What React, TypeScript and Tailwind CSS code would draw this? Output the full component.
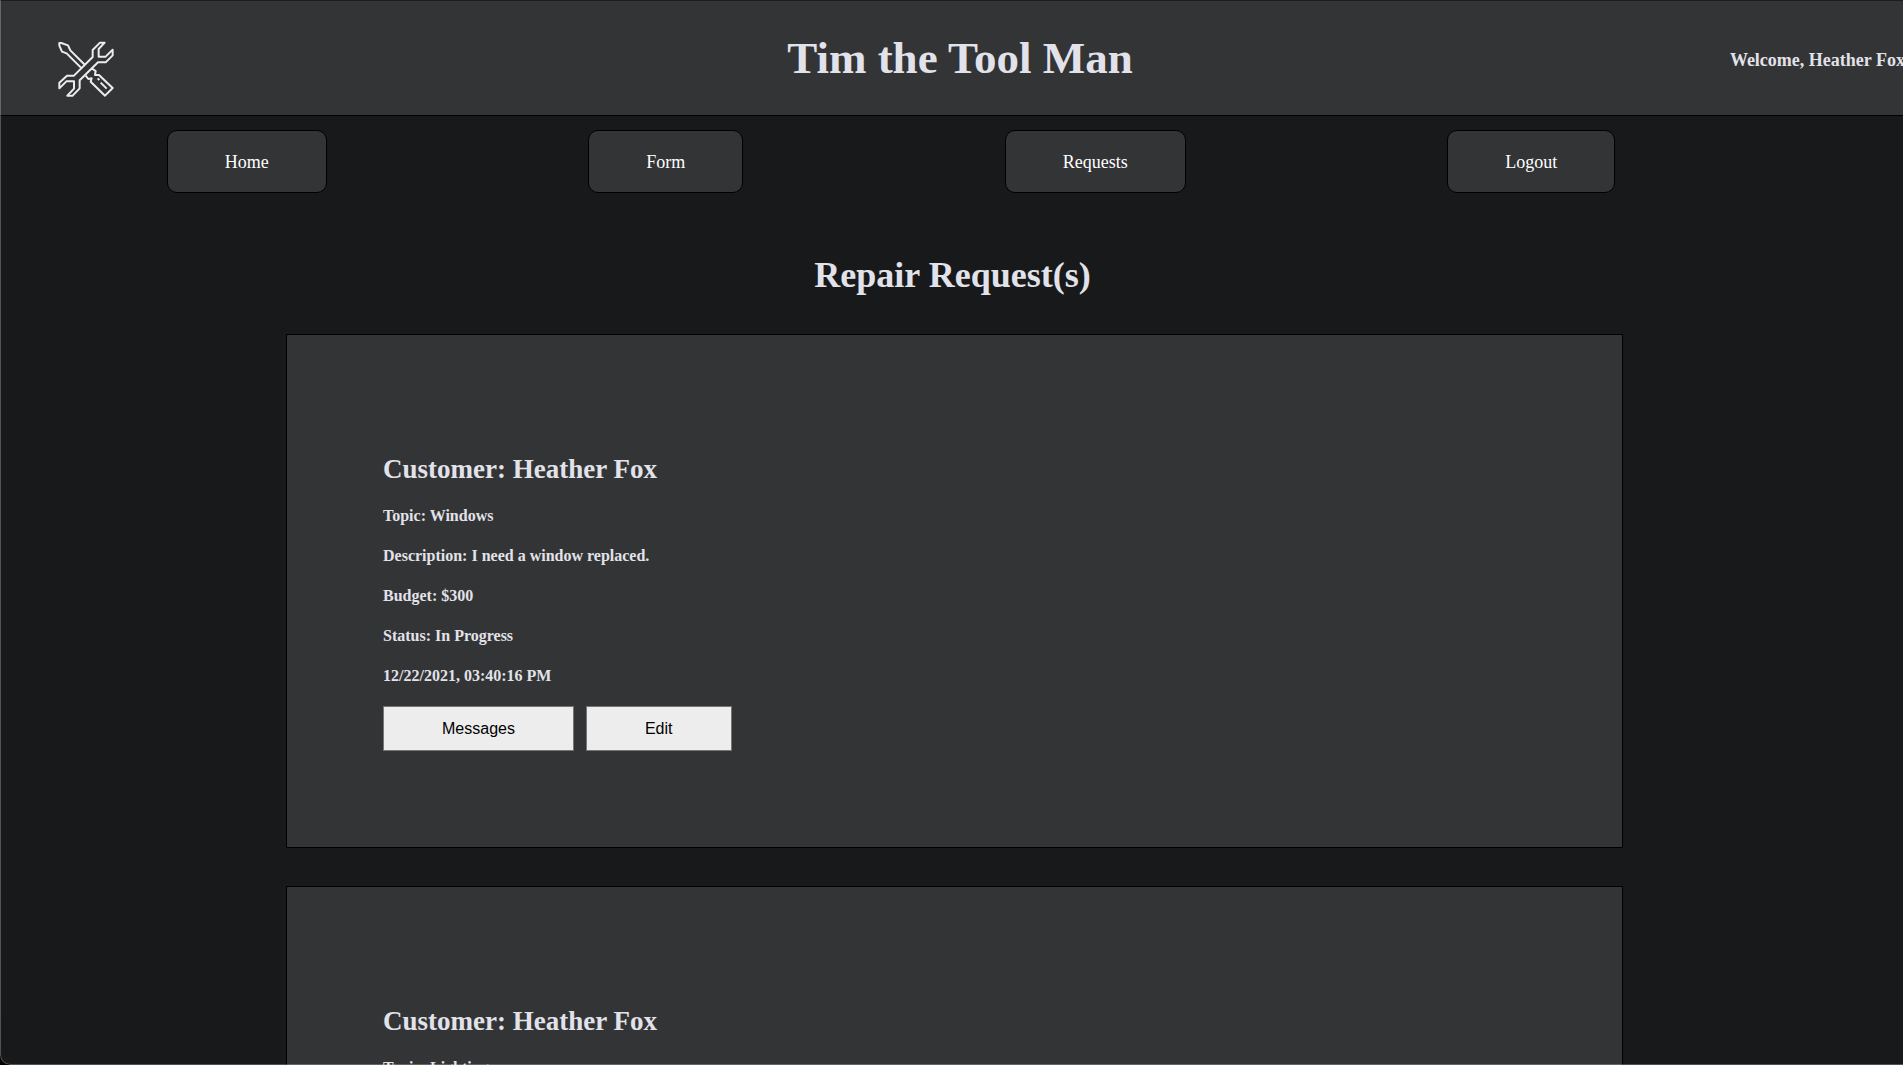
const navItems = ["Home", "Form", "Requests", "Logout"];

type Request = {
  id: number;
  customer: string;
  topic: string;
  description: string;
  budget: string;
  status: string;
  date: string;
};

const requests: Request[] = [
  {
    id: 1,
    customer: "Heather Fox",
    topic: "Windows",
    description: "I need a window replaced.",
    budget: "$300",
    status: "In Progress",
    date: "12/22/2021, 03:40:16 PM",
  },
  {
    id: 2,
    customer: "Heather Fox",
    topic: "Lighting",
    description: "",
    budget: "",
    status: "",
    date: "",
  },
];

function ToolsLogo() {
  return (
    <svg
      viewBox="54 48 168 168"
      className="size-14"
      fill="none"
      stroke="#ececec"
      strokeWidth="6"
      strokeLinejoin="round"
      aria-hidden="true"
    >
      <path d="M125 130 L80 85 L66 80 L58 62 V54 H64 L84 61 L91 76 L135 120" />
      <path d="M194 53 H180 L158 75 V96 L102 152 H81 L58 173 V190 L79 169 H102 V191 L82 212 H98 L119 190 V166 L174 112 H197 L218 91 V74 L197 95 H176 V72 Z" />
      <path d="M155 130 L167 138 L165 150 H177 L218 189 L195 212 L152 170 L155 160 L145 162 L137 152" />
      <path d="M173 160 L178 165 M182 173 L200 191" />
    </svg>
  );
}

function RequestCard({ request }: { request: Request }) {
  const lines = [
    `Topic: ${request.topic}`,
    `Description: ${request.description}`,
    `Budget: ${request.budget}`,
    `Status: ${request.status}`,
    request.date,
  ];
  return (
    <article className="border border-black bg-[#333435] px-24 pt-[118px] pb-24">
      <h3 className="text-[27px] leading-8 font-bold">Customer: {request.customer}</h3>
      <div className="mt-[22px] flex flex-col gap-[22px]">
        {lines.map((line, i) => (
          <h4 key={i} className="h-[18px] text-base leading-[18px] font-bold">
            {line}
          </h4>
        ))}
      </div>
      <div className="mt-[21px] flex gap-3">
        {["Messages", "Edit"].map((label) => (
          <button
            key={label}
            type="button"
            className="h-[45px] border border-[#767676] bg-[#ededed] px-[58px] font-['Liberation_Sans',Arial,sans-serif] text-base text-black"
          >
            {label}
          </button>
        ))}
      </div>
    </article>
  );
}

export default function App() {
  return (
    <div className="h-screen overflow-hidden bg-black font-['Liberation_Serif','Times_New_Roman',serif] text-[#e2e2ea]">
      <div className="relative h-full overflow-hidden rounded-bl-[10px] bg-[#18191a]">
        <header className="flex h-29 items-center justify-between border-y border-t-[#1c1d1e] border-b-black bg-[#333435]">
          <div className="w-[190px] shrink-0 pt-[22px] pl-[58px]">
            <ToolsLogo />
          </div>
          <h1 className="text-[45px] leading-none font-bold whitespace-nowrap">Tim the Tool Man</h1>
          <p className="-mr-0.5 pt-1 text-lg font-bold whitespace-nowrap">Welcome, Heather Fox</p>
        </header>

        <nav className="mt-3.5 mr-[157px] ml-9 flex justify-around">
          {navItems.map((item) => (
            <a
              key={item}
              href="#"
              className="rounded-[10px] border border-black bg-[#333435] px-[57px] pt-[21px] pb-[19px] text-lg leading-[21px] text-white"
            >
              {item}
            </a>
          ))}
        </nav>

        <main>
          <h2 className="mt-[61px] pl-0.5 text-center text-4xl leading-[42px] font-bold">Repair Request(s)</h2>
          <div className="mt-[38px] mr-[280px] ml-[286px] flex flex-col gap-[38px]">
            {requests.map((request) => (
              <RequestCard key={request.id} request={request} />
            ))}
          </div>
        </main>

        <div className="pointer-events-none absolute inset-0 rounded-bl-[10px] border-b border-l border-white/25" />
      </div>
    </div>
  );
}
